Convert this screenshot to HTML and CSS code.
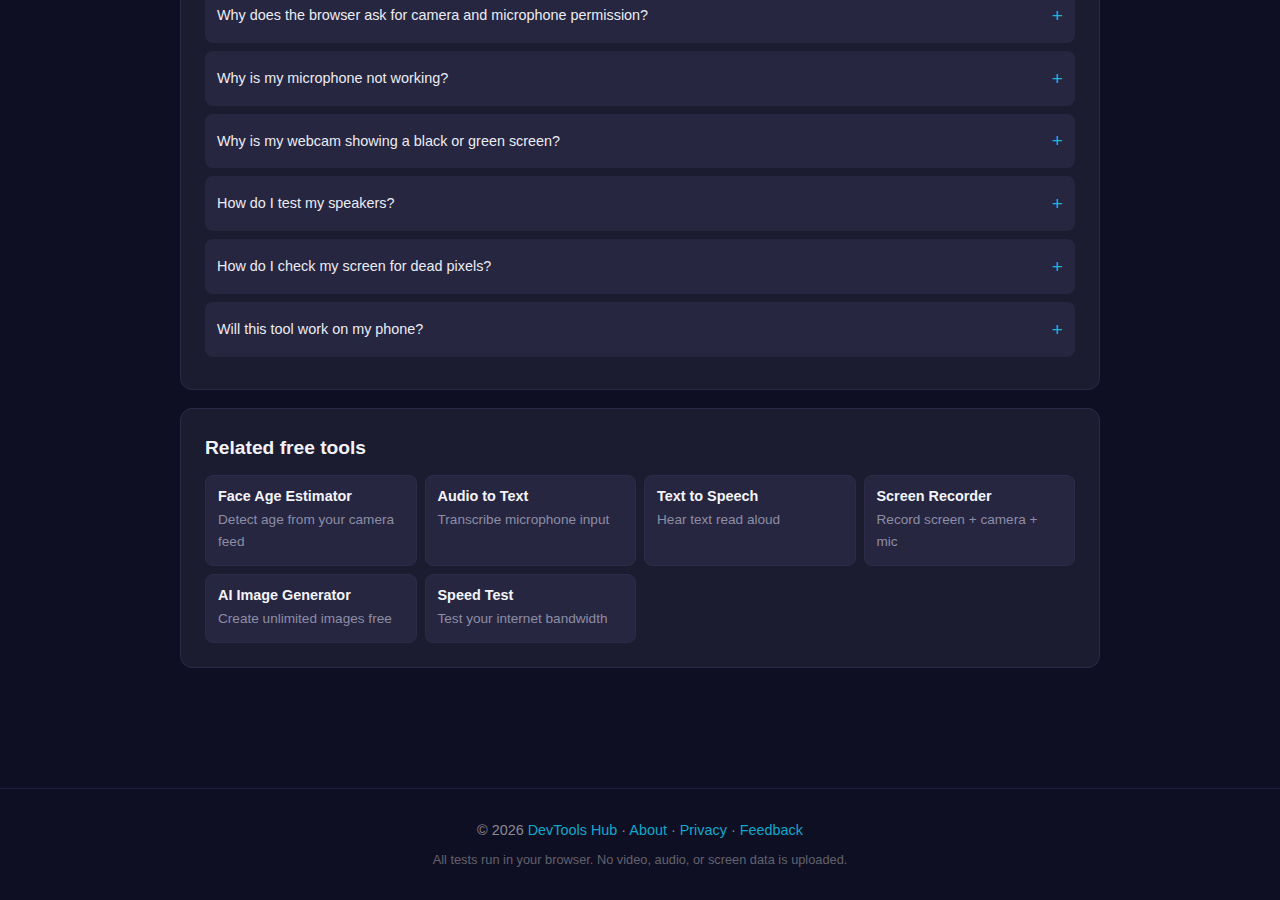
FILE: index.html
```html
<!DOCTYPE html>
<html lang="en">
<head>
    <meta charset="UTF-8">
    <meta name="viewport" content="width=device-width, initial-scale=1.0">
    <title>Device Tester - DevTools Hub</title>
    <link rel="stylesheet" href="styles.css">
</head>
<body>

    <main class="container">
        <!-- FAQ (page is scrolled down, top of this card is above the fold) -->
        <section class="card faq">
            <details class="faq-item">
                <summary>Why does the browser ask for camera and microphone permission?<span class="plus">+</span></summary>
                <p>Browsers protect your devices. A site can only read your camera or mic after you allow it.</p>
            </details>
            <details class="faq-item">
                <summary>Why is my microphone not working?<span class="plus">+</span></summary>
                <p>Check that the right input is selected and that no other app is using it.</p>
            </details>
            <details class="faq-item">
                <summary>Why is my webcam showing a black or green screen?<span class="plus">+</span></summary>
                <p>Usually a driver issue or another app holding the camera.</p>
            </details>
            <details class="faq-item">
                <summary>How do I test my speakers?<span class="plus">+</span></summary>
                <p>Play the left / right test tones and listen for each channel.</p>
            </details>
            <details class="faq-item">
                <summary>How do I check my screen for dead pixels?<span class="plus">+</span></summary>
                <p>Run the full screen colour test and look for dots that stay the same colour.</p>
            </details>
            <details class="faq-item">
                <summary>Will this tool work on my phone?<span class="plus">+</span></summary>
                <p>Yes, it works in any modern mobile browser.</p>
            </details>
        </section>

        <!-- Related tools -->
        <section class="card related">
            <h2>Related free tools</h2>
            <div class="tool-grid">
                <a class="tool-card" href="#">
                    <h3>Face Age Estimator</h3>
                    <p>Detect age from your camera feed</p>
                </a>
                <a class="tool-card" href="#">
                    <h3>Audio to Text</h3>
                    <p>Transcribe microphone input</p>
                </a>
                <a class="tool-card" href="#">
                    <h3>Text to Speech</h3>
                    <p>Hear text read aloud</p>
                </a>
                <a class="tool-card" href="#">
                    <h3>Screen Recorder</h3>
                    <p>Record screen + camera + mic</p>
                </a>
                <a class="tool-card" href="#">
                    <h3>AI Image Generator</h3>
                    <p>Create unlimited images free</p>
                </a>
                <a class="tool-card" href="#">
                    <h3>Speed Test</h3>
                    <p>Test your internet bandwidth</p>
                </a>
            </div>
        </section>
    </main>

    <footer class="footer">
        <p>&copy; 2026 <a href="#">DevTools Hub</a> &middot; <a href="#">About</a> &middot; <a href="#">Privacy</a> &middot; <a href="#">Feedback</a></p>
        <p class="note">All tests run in your browser. No video, audio, or screen data is uploaded.</p>
    </footer>

</body>
</html>
```

FILE: styles.css
```css
/* General Styles */
body {
    font-family: 'Liberation Sans', Arial, sans-serif;
    background-color: #0f0f23;
    color: #e8e8f0;
    margin: 0;
    padding: 0;
}

/* Main Container */
.container {
    max-width: 920px;
    margin: -37px auto 120px;
}

.card {
    background: #1c1c30;
    border: 1px solid #2a2a48;
    border-radius: 12px;
    padding: 24px;
}

.card + .card {
    margin-top: 18px;
}

/* FAQ */
.faq-item {
    background-color: #262640;
    border-radius: 8px;
    margin-bottom: 8px;
}

.faq-item summary {
    display: flex;
    justify-content: space-between;
    align-items: center;
    padding: 16px 12px;
    font-size: 14.4px;
    line-height: 22.8px;
    color: #ececf4;
    cursor: pointer;
    list-style: none;
}

.faq-item summary::-webkit-details-marker {
    display: none;
}

.faq-item .plus {
    color: #1fb5d6;
    font-size: 19.2px;
    line-height: 1;
}

.faq-item p {
    margin: 0;
    padding: 0 12px 16px;
    font-size: 13.6px;
    color: #9a9ab0;
}

/* Related tools */
.related h2 {
    margin: 2px 0 13px;
    font-size: 19.2px;
    line-height: 1.4;
    color: #f2f2f8;
}

.tool-grid {
    display: grid;
    grid-template-columns: repeat(4, 1fr);
    gap: 8px;
}

.tool-card {
    display: block;
    background: #262640;
    border: 1px solid #2c2c4a;
    border-radius: 8px;
    padding: 12px;
    text-decoration: none;
}

.tool-card h3 {
    margin: 0 0 4px;
    font-size: 14.4px;
    line-height: 17.4px;
    color: #f4f4fa;
}

.tool-card p {
    margin: 0;
    font-size: 13.6px;
    line-height: 1.6;
    color: #8d8da6;
}

/* Footer */
.footer {
    border-top: 1px solid #1e1e42;
    padding: 30px 20px 24px;
    text-align: center;
}

.footer p {
    margin: 0;
    font-size: 14.4px;
    line-height: 1.6;
    color: #8a8a96;
}

.footer a {
    color: #0fa8cc;
    text-decoration: none;
}

.footer .note {
    margin-top: 8px;
    font-size: 12.8px;
    color: #62626e;
}
```
